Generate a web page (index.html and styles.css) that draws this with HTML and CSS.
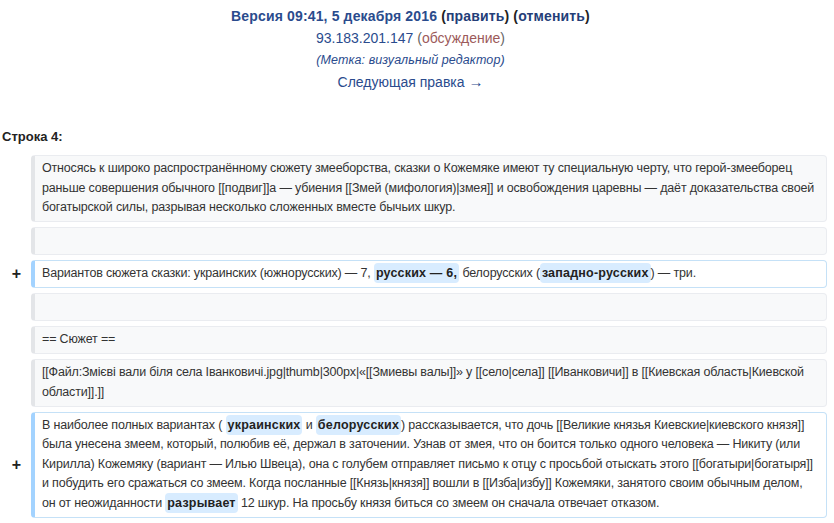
FILE: index.html
```html
<!DOCTYPE html>
<html lang="ru">
<head>
<meta charset="utf-8">
<title>Разница между версиями</title>
<link rel="stylesheet" href="styles.css">
</head>
<body>
<div class="rev-header">
  <div class="rev-title"><a class="rev-link" href="#">Версия 09:41, 5 декабря 2016</a> <span class="paren">(<a class="rev-action" href="#">править</a>)</span> <span class="paren">(<a class="rev-action" href="#">отменить</a>)</span></div>
  <div class="rev-user"><a class="user-link" href="#">93.183.201.147</a> <span class="talk-paren">(<a class="talk-link" href="#">обсуждение</a>)</span></div>
  <div class="rev-tags">(Метка: визуальный редактор)</div>
  <div class="rev-next"><a class="user-link" href="#">Следующая правка <span class="arrow">→</span></a></div>
</div>

<div class="line-no">Строка 4:</div>

<div class="diff">
  <div class="diff-row">
    <div class="marker"></div>
    <div class="cell context">Относясь к широко распространённому сюжету змееборства, сказки о Кожемяке имеют ту специальную черту, что герой-змееборец раньше совершения обычного [[подвиг]]а — убиения [[Змей (мифология)|змея]] и освобождения царевны — даёт доказательства своей богатырской силы, разрывая несколько сложенных вместе бычьих шкур.</div>
  </div>
  <div class="diff-row">
    <div class="marker"></div>
    <div class="cell context"></div>
  </div>
  <div class="diff-row">
    <div class="marker">+</div>
    <div class="cell added">Вариантов сюжета сказки: украинских (южнорусских) — 7, <span class="change">русских — 6,</span> белорусских (<span class="change">западно-русских</span>) — три.</div>
  </div>
  <div class="diff-row">
    <div class="marker"></div>
    <div class="cell context"></div>
  </div>
  <div class="diff-row">
    <div class="marker"></div>
    <div class="cell context">== Сюжет ==</div>
  </div>
  <div class="diff-row">
    <div class="marker"></div>
    <div class="cell context">[[Файл:Змієві вали біля села Іванковичі.jpg|thumb|300px|«[[Змиевы валы]]» у [[село|села]] [[Иванковичи]] в [[Киевская область|Киевской области]].]]</div>
  </div>
  <div class="diff-row">
    <div class="marker">+</div>
    <div class="cell added">В наиболее полных вариантах ( <span class="change">украинских</span> и <span class="change">белорусских</span>) рассказывается, что дочь [[Великие князья Киевские|киевского князя]] была унесена змеем, который, полюбив её, держал в заточении. Узнав от змея, что он боится только одного человека — Никиту (или Кирилла) Кожемяку (вариант — Илью Швеца), она с голубем отправляет письмо к отцу с просьбой отыскать этого [[богатыри|богатыря]] и побудить его сражаться со змеем. Когда посланные [[Князь|князя]] вошли в [[Изба|избу]] Кожемяки, занятого своим обычным делом, он от неожиданности <span class="change">разрывает</span> 12 шкур. На просьбу князя биться со змеем он сначала отвечает отказом.</div>
  </div>
</div>
</body>
</html>
```

FILE: styles.css
```css
html, body {
  margin: 0;
  padding: 0;
  background: #ffffff;
}

body {
  font-family: "Liberation Sans", Arial, sans-serif;
  color: #222222;
  width: 834px;
}

a {
  text-decoration: none;
}

.rev-header {
  padding: 5px 13px 0 0;
  text-align: center;
  font-size: 14px;
  line-height: 22px;
}

.rev-title {
  font-weight: bold;
  letter-spacing: 0.15px;
}

.rev-link {
  color: #2a4b8d;
}

.paren {
  color: #222222;
}

.rev-action {
  color: #243e78;
}

.user-link {
  color: #2a4b8d;
}

.arrow {
  font-size: 15px;
}

.talk-paren {
  color: #666666;
}

.talk-link {
  color: #9c5a5a;
}

.rev-tags {
  font-size: 12.5px;
  font-style: italic;
  color: #2a4b8d;
  letter-spacing: 0.1px;
}

.line-no {
  margin-top: 35px;
  padding-left: 2px;
  font-weight: bold;
  font-size: 13px;
  line-height: 18px;
  color: #222222;
}

.diff {
  margin-top: 9px;
  padding-right: 7px;
  display: flex;
  flex-direction: column;
  gap: 5px;
}

.diff-row {
  display: flex;
  align-items: stretch;
}

.marker {
  width: 31px;
  flex: 0 0 31px;
  display: flex;
  align-items: center;
  justify-content: flex-end;
  padding-right: 10px;
  box-sizing: border-box;
  font-weight: bold;
  font-size: 16px;
  color: #222222;
}

.cell {
  flex: 1;
  min-height: 19.5px;
  padding: 3.25px 7px 3.25px 7px;
  font-size: 12.5px;
  letter-spacing: -0.17px;
  line-height: 19.5px;
  color: #333333;
  border-style: solid;
  border-width: 1px 1px 1px 4px;
  border-radius: 4px;
  white-space: pre-wrap;
  word-wrap: break-word;
}

.context {
  background: #f8f9fa;
  border-color: #eaecf0;
  border-left-color: #e3e5e8;
}

.added {
  background: #ffffff;
  border-color: #c5e1f7;
  border-left-color: #a3d3ff;
}

.change {
  background: #d8ecff;
  border-radius: 4px;
  padding: 3px 2px;
  font-weight: bold;
  letter-spacing: 0.2px;
  color: #222222;
}
```
